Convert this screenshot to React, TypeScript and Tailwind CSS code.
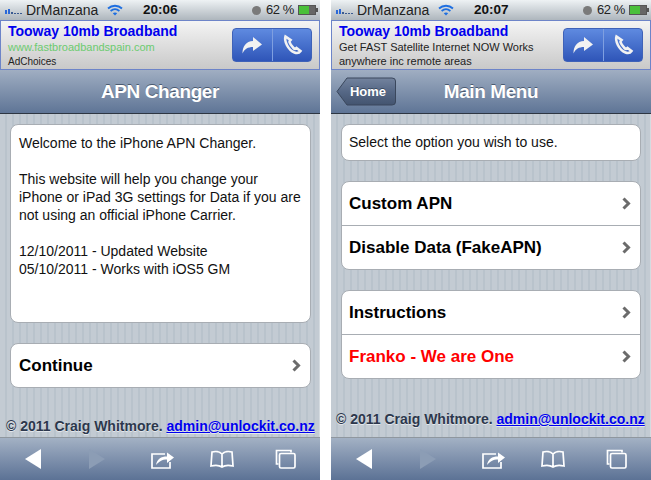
const stripes = "bg-[repeating-linear-gradient(90deg,#c3cbd3_0px,#c3cbd3_5px,#b9c3cc_5px,#b9c3cc_7px)]";

function ListArrow() {
  return (
    <svg className="w-[9px] h-[13px] shrink-0" viewBox="0 0 9 13" fill="none" stroke="#6b6b6b" strokeWidth="3">
      <path d="M1.500 1.500 6.500 6.500 1.500 11.500" />
    </svg>
  );
}

function StatusBar({ time }: { time: string }) {
  return (
    <div className="relative h-5 flex items-center bg-gradient-to-b from-[#eef2f4] to-[#aeb6bd] pl-[5px] pr-[2px] text-[14px]">
      <div className="flex items-end gap-px h-2">
        <span className="w-[2px] h-1 bg-[#2a68d8]" />
        <span className="w-[2px] h-[5px] bg-[#2a68d8]" />
        <span className="w-[2px] h-[2px] bg-[#3a5a90]" />
        <span className="w-[2px] h-px bg-[#3a5a90]" />
        <span className="w-[2px] h-px bg-[#3a5a90]" />
        <span className="w-[2px] h-px bg-[#3a5a90]" />
      </div>
      <span className="ml-[4px] text-[#222]">DrManzana</span>
      <svg className="ml-[9px] w-4 h-3" viewBox="0 0 16 12" fill="none" stroke="#1f6fe0" strokeWidth="1.800">
        <path d="M1 4.500C5 .8 11 .8 15 4.500" />
        <path d="M3.600 7C6.200 4.800 9.800 4.800 12.400 7" />
        <path d="M8 11.500 5.800 9.200C7 8.200 9 8.200 10.200 9.200Z" fill="#1f6fe0" stroke="none" />
      </svg>
      <span className="absolute left-[143px] font-bold text-[13.500px] text-[#111]">{time}</span>
      <div className="ml-auto flex items-center">
        <span className="w-[9px] h-[9px] rounded-full bg-[#7a7a7a] mr-[5px]" />
        <span className="text-[13px] text-[#222] tracking-[-0.4px]">62 %</span>
        <span className="ml-[4px] flex items-center">
          <span className="w-[18px] h-[10px] border border-[#555] bg-[linear-gradient(90deg,#4ac03a_0,#4ac03a_65%,#666_65%)]" />
          <span className="w-[2px] h-1 bg-[#555]" />
        </span>
      </div>
    </div>
  );
}

function AdBanner({ children }: { children: React.ReactNode }) {
  return (
    <div className="h-[50px] flex items-center justify-between border border-[#6d84c8] bg-gradient-to-b from-[#f4f4f4] to-[#c9c9c9] pl-[7px] pr-[7px]">
      <div className="min-w-0">
        <div className="text-[14px] leading-[16px] font-bold text-[#0000ee]">Tooway 10mb Broadband</div>
        {children}
      </div>
      <div className="w-[80px] h-[34px] flex rounded-[4px] bg-gradient-to-b from-[#5f8ae0] to-[#2f55b8] border border-[#3f62b8] shrink-0">
        <div className="flex-1 flex items-center justify-center border-r border-[#7f9fe0]">
          <svg className="w-[22px] h-[18px]" viewBox="0 0 22 18" fill="#f2f2f2">
            <path d="M12 1 21 8.500 12 15V11C7 11 3.500 13 1.500 17.500 1.500 10 5 5.500 12 5Z" />
          </svg>
        </div>
        <div className="flex-1 flex items-center justify-center">
          <svg className="w-[22px] h-[22px]" viewBox="0 0 22 22" fill="none" stroke="#f2f2f2" strokeWidth="2.600" strokeLinecap="round">
            <path d="M4.500 2.500C3 7 7 16 13.500 18.500 16 19.500 18.500 18.500 19.500 17L15.500 14C14.500 15 13.500 15 12.500 14 10.500 12 9 10 8.500 8 8.500 7 9 6.500 9.500 6Z" />
          </svg>
        </div>
      </div>
    </div>
  );
}

function NavBar({ title, back }: { title: string; back?: string }) {
  return (
    <div className="relative h-[44px] flex items-center justify-center bg-gradient-to-b from-[#a0aec2] to-[#5f7596] border-b border-[#2d3642]">
      {back && (
        <div className="absolute left-[5px] top-[7px] h-[29px] w-[60px] flex items-center justify-center pl-1 text-white text-[13px] font-bold [text-shadow:0_-1px_0_#3a4a60]">
          <svg className="absolute inset-0 w-full h-full" viewBox="0 0 60 29">
            <defs>
              <linearGradient id="backFill" x1="0" y1="0" x2="0" y2="1">
                <stop offset="0" stopColor="#73839e" />
                <stop offset="0.5" stopColor="#566886" />
                <stop offset="1" stopColor="#43546f" />
              </linearGradient>
            </defs>
            <path d="M1 14.500 11 1H56Q59.500 1 59.500 4V25Q59.500 28 56 28H11Z" fill="url(#backFill)" stroke="#3a475c" />
          </svg>
          <span className="relative">{back}</span>
        </div>
      )}
      <h1 className="text-white text-[19px] font-bold tracking-[-0.4px] [text-shadow:0_-1px_0_#4a5a70] translate-y-px">{title}</h1>
    </div>
  );
}

function ListGroup({ items, inset }: { items: { label: string; red?: boolean }[]; inset: string }) {
  return (
    <div className="rounded-[8px] bg-white border border-[#a8adb3] divide-y divide-[#a8adb3]">
      {items.map((item) => (
        <div key={item.label} className={`h-[43px] box-content flex items-center justify-between pr-[9px] ${inset}`}>
          <span className={item.red ? "text-[17px] font-bold text-[#ff0000]" : "text-[17px] font-bold text-black"}>{item.label}</span>
          <ListArrow />
        </div>
      ))}
    </div>
  );
}

function Footer() {
  return (
    <div className="text-[14px] leading-4 font-bold text-[#2c374c] [text-shadow:0_1px_0_#e4e8ec] whitespace-nowrap">
      © 2011 Craig Whitmore. <a className="text-[#0000ee] underline">admin@unlockit.co.nz</a>
    </div>
  );
}

function Toolbar() {
  return (
    <div className="h-[43px] flex items-center pl-[25px] border-t border-[#8f979f] bg-gradient-to-b from-[#a3b1c4] to-[#5c7295]">
      <svg className="w-4 h-5" viewBox="0 0 16 20" fill="white"><path d="M16 0V20L0 10Z" /></svg>
      <svg className="w-4 h-5 ml-[48px]" viewBox="0 0 16 20" fill="#8c9db5"><path d="M0 0V20L16 10Z" /></svg>
      <svg className="w-6 h-5 ml-[46px]" viewBox="0 0 24 20" fill="none" stroke="white" strokeWidth="1.700">
        <path d="M14 5H1V19H19V13" />
        <path d="M5 16C6 10 10 7.500 16 7.500V3.500L23 8.500 16 14V10.500C11 10.500 8 12.500 5 16Z" fill="white" stroke="none" />
      </svg>
      <svg className="w-6 h-[18px] ml-[35px]" viewBox="0 0 24 18" fill="none" stroke="white" strokeWidth="1.700">
        <path d="M12 4C9.500 1.500 5 1 2 2L1 16C5 15 9 15 12 17 15 15 19 15 23 16L22 2C19 1 14.500 1.500 12 4V17" />
      </svg>
      <svg className="w-[21px] h-5 ml-[41px]" viewBox="0 0 21 20" fill="none" stroke="white" strokeWidth="1.700">
        <path d="M3.500 15H1.500V1.500H16V3.500" />
        <rect x="4.500" y="4.500" width="15.500" height="14.500" rx="1.500" />
      </svg>
    </div>
  );
}

function Phone({ title, back, time, ad, children }: { title: string; back?: string; time: string; ad: React.ReactNode; children: React.ReactNode }) {
  return (
    <div className="w-[320px] h-[480px] flex flex-col shrink-0 font-['Liberation_Sans',sans-serif]">
      <StatusBar time={time} />
      <AdBanner>{ad}</AdBanner>
      <NavBar title={title} back={back} />
      <div className={`flex-1 flex flex-col pl-[10px] pr-[8px] pt-[10px] border-r border-[#d5dbe0] ${stripes}`}>{children}</div>
      <Toolbar />
    </div>
  );
}

export default function App() {
  return (
    <div className="w-[651px] h-[480px] flex gap-[11px] bg-white overflow-hidden">
      <Phone
        title="APN Changer"
        time="20:06"
        ad={
          <>
            <div className="text-[11px] leading-[14px] mt-px text-[#6ccb70]">www.fastbroadbandspain.com</div>
            <div className="text-[10px] leading-[13px] mt-px text-[#222]">AdChoices</div>
          </>
        }
      >
        <div className="h-[199px] rounded-[8px] bg-white border border-[#a8adb3] px-2 py-[9px] text-[14px] leading-[18px] text-[#111]">
          <p>Welcome to the iPhone APN Changer.</p>
          <p className="mt-[18px]">This website will help you change your iPhone or iPad 3G settings for Data if you are not using an official iPhone Carrier.</p>
          <p className="mt-[18px]">12/10/2011 - Updated Website<br />05/10/2011 - Works with iOS5 GM</p>
        </div>
        <div className="mt-[20px]">
          <ListGroup inset="pl-2" items={[{ label: "Continue" }]} />
        </div>
        <div className="mt-auto mb-[3px] -ml-[4px] -mr-[5px]">
          <Footer />
        </div>
      </Phone>
      <Phone
        title="Main Menu"
        back="Home"
        time="20:07"
        ad={
          <>
            <div className="text-[11px] leading-[14px] mt-px text-[#222]">Get FAST Satellite Internet NOW Works</div>
            <div className="text-[11px] leading-[14px] text-[#222]">anywhere inc remote areas</div>
          </>
        }
      >
        <div className="h-[37px] flex items-center rounded-[8px] bg-white border border-[#a8adb3] px-[7px] mr-px text-[14px] text-[#111]">
          Select the option you wish to use.
        </div>
        <div className="mt-[20px] mr-px">
          <ListGroup inset="pl-[7px]" items={[{ label: "Custom APN" }, { label: "Disable Data (FakeAPN)" }]} />
        </div>
        <div className="mt-[20px] mr-px">
          <ListGroup inset="pl-[7px]" items={[{ label: "Instructions" }, { label: "Franko - We are One", red: true }]} />
        </div>
        <div className="mt-[32px] -ml-[5px] -mr-[5px]">
          <Footer />
        </div>
      </Phone>
    </div>
  );
}
